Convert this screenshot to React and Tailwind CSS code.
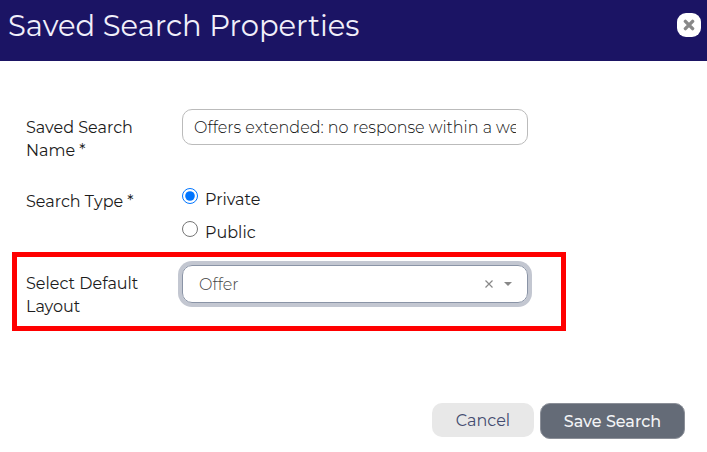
import { useState } from "react";

const Row = ({ label, htmlFor, children, className = "" }) => (
  <div className={`flex ${className}`}>
    <label htmlFor={htmlFor} className="w-[156px] shrink-0 pr-6 pt-[7px]">
      {label}
    </label>
    <div className="min-w-0 flex-1">{children}</div>
  </div>
);

export default function App() {
  const [name, setName] = useState("Offers extended: no response within a week");
  const [type, setType] = useState("private");
  const [layout, setLayout] = useState("Offer");

  return (
    <div className="min-h-screen bg-white font-['Montserrat',Inter,sans-serif] text-base leading-[23px] text-[#1c1c1c]">
      <header className="flex h-[61px] items-start justify-between bg-[#1b1464] pl-2 pr-[6px]">
        <h1 className="pt-2 text-[29px] leading-9 text-[#f1effa]">
          Saved Search Properties
        </h1>
        <button
          type="button"
          aria-label="Close"
          className="mt-[13px] flex size-6 items-center justify-center rounded-[9px] bg-white"
        >
          <svg viewBox="0 0 12 12" className="size-3" stroke="#888" strokeWidth="3.4" strokeLinecap="round">
            <path d="M2.4 2.4l7.2 7.2M9.6 2.4L2.4 9.6" />
          </svg>
        </button>
      </header>

      <form onSubmit={(e) => e.preventDefault()}>
        <div className="max-w-[578px] px-3 pt-12">
          {/* Name */}
          <Row label="Saved Search Name *" htmlFor="name" className="pl-[14px] pr-[38px]">
            <input
              id="name"
              type="text"
              value={name}
              onChange={(e) => setName(e.target.value)}
              className="block h-9 w-full rounded-[10px] border border-[#bbb] px-[11px] font-light text-[#111] outline-none"
            />
          </Row>

          {/* Type */}
          <fieldset className="mt-5 flex px-[14px]">
            <legend className="float-left w-[156px] shrink-0 pt-2">Search Type *</legend>
            <div className="flex flex-col gap-[10px] pt-[6px]">
              <label className="flex items-start gap-[7px]">
                <input
                  type="radio"
                  name="type"
                  checked={type === "private"}
                  onChange={() => setType("private")}
                  className="size-4 accent-[#0075ff]"
                />
                Private
              </label>
              <label className="flex items-start gap-[7px]">
                <input
                  type="radio"
                  name="type"
                  checked={type === "public"}
                  onChange={() => setType("public")}
                  className="size-4 accent-[#0075ff]"
                />
                Public
              </label>
            </div>
          </fieldset>

          {/* Layout */}
          <div className="mt-2 border-[5px] border-[#ff0000] py-2">
            <Row label="Select Default Layout" htmlFor="layout" className="pl-[9px] pr-[33px]">
              <div className="flex h-[38px] items-center rounded-[10px] border border-[#8a94a6] pl-4 pr-[15px] text-[#444] ring-4 ring-[#c3c7d1]">
                <select
                  id="layout"
                  value={layout}
                  onChange={(e) => setLayout(e.target.value)}
                  className="min-w-0 flex-1 appearance-none bg-transparent font-light outline-none"
                >
                  <option value=""></option>
                  <option>Offer</option>
                </select>
                <button type="button" aria-label="Clear layout" onClick={() => setLayout("")}>
                  <svg viewBox="0 0 8 8" className="size-2" stroke="#888" strokeWidth="1.2">
                    <path d="M.5.5l7 7M7.5.5l-7 7" />
                  </svg>
                </button>
                <svg viewBox="0 0 8 4" className="ml-[11px] h-1 w-2" fill="#888">
                  <path d="M0 0h8L4 4z" />
                </svg>
              </div>
            </Row>
          </div>
        </div>

        <footer className="flex items-start justify-end gap-[6px] pr-[22px] pt-[72px]">
          <button type="button" className="h-[34px] w-[102px] rounded-[10px] bg-[#e8e8e8] text-[#444c70]">
            Cancel
          </button>
          <button
            type="submit"
            className="h-9 w-[145px] rounded-[10px] border border-[#8b8f98] bg-[#646b77] font-medium text-[#f2f3f5]"
          >
            Save Search
          </button>
        </footer>
      </form>
    </div>
  );
}
